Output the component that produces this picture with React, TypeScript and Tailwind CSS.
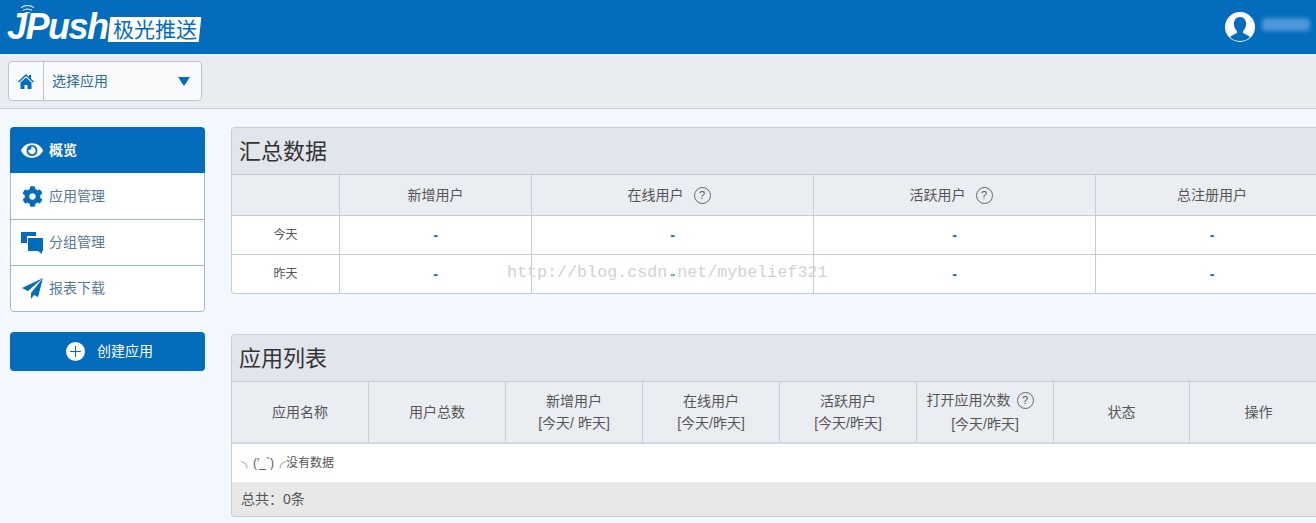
import type { ReactNode } from "react";
import { FaCog, FaEye } from "react-icons/fa";

const CJK = "font-['Liberation_Sans','Noto_Sans_CJK_SC',sans-serif]";

const NAV: { label: string; icon: ReactNode; active?: boolean }[] = [
    { label: "概览", icon: <FaEye className="size-[23px] text-white" />, active: true },
    { label: "应用管理", icon: <FaCog className="size-[21px] text-[#036cbc]" /> },
    { label: "分组管理", icon: <CommentsIcon /> },
    { label: "报表下载", icon: <PlaneIcon /> },
];

function CommentsIcon() {
    return (
        <svg viewBox="0 0 22 22" className="size-[22px] text-[#036cbc]" fill="currentColor">
            <path d="M0 0h15v4H6v7H3l-3 0z" />
            <path d="M7 6h15v13h-1v3l-4-3H7z" />
        </svg>
    );
}

function PlaneIcon() {
    return (
        <svg viewBox="0 0 21 21" className="size-[21px] text-[#036cbc]" fill="currentColor">
            <path d="M21 0 0 10l6 3L21 0 9 15v6l3-4 4 2z" />
        </svg>
    );
}

function HomeIcon() {
    return (
        <svg viewBox="0 0 16 15" className="h-[15px] w-[16px] text-[#036cbc]" fill="currentColor">
            <path d="M8 0 0 7.5l1 1L8 2l7 6.5 1-1-3-2.8V1h-2v1.9z" />
            <path d="M8 3.5 2.5 8.5V15h4v-4h3v4h4V8.5z" />
        </svg>
    );
}

function Help({ className = "ml-[10px]" }: { className?: string }) {
    return (
        <span className={`inline-flex size-[17px] items-center justify-center rounded-full border border-[#666] text-[11px] leading-none text-[#555] ${className}`}>
            ?
        </span>
    );
}

function Logo() {
    return (
        <div className="flex items-center pl-[7px] pb-[1px]">
            <div className="relative">
                <svg viewBox="0 0 16 12" className="absolute left-[13px] top-[-4px] h-[11px] w-[15px]" fill="none" stroke="white" strokeWidth="1.1">
                    <path d="M1 4c4-3 10-3 14 0M3 7c3-2 7-2 10 0M5 10c2-1 4-1 6 0" />
                </svg>
                <span className="block font-['Liberation_Sans',sans-serif] text-[36px] leading-[38px] font-bold italic tracking-[-1.5px] text-white">JPush</span>
            </div>
            <span className={`ml-[1px] mt-[5px] flex h-[25px] w-[91px] -skew-x-6 items-center justify-center bg-white ${CJK}`}>
                <span className="skew-x-6 text-[21px] leading-none text-[#036cbc]">极光推送</span>
            </span>
        </div>
    );
}

function Header() {
    return (
        <header className="flex h-[54px] items-center justify-between bg-[#036cbd]">
            <Logo />
            <div className="flex items-center gap-[7px] pr-[6px]">
                <span className="relative size-[30px] overflow-hidden rounded-full bg-white">
                    <svg viewBox="0 0 30 30" className="size-[30px]" fill="#036cbd">
                        <path d="M15 5c-4 0-6 3-6 7 0 3 1 5 3 7v2c-2 1-5 2-7 4 3 3 6 4 10 4s7-1 10-4c-2-2-5-3-7-4v-2c2-2 3-4 3-7 0-4-2-7-6-7z" />
                    </svg>
                </span>
                <span className="mb-[6px] h-[13px] w-[48px] rounded-sm bg-[#4f97d8] blur-[2px]" />
            </div>
        </header>
    );
}

function AppSelect() {
    return (
        <div className="flex h-[55px] items-center border-b border-[#c9ced8] bg-[#e9ecf1] pl-[8px]">
            <div className="flex h-[40px] w-[194px] items-stretch rounded border border-[#bcc2cf] bg-[#f8fafc]">
                <span className="flex w-[35px] items-center justify-center border-r border-[#bcc2cf]">
                    <HomeIcon />
                </span>
                <span className="flex flex-1 items-center justify-between pl-[8px] pr-[11px] text-[14px] text-[#2f6d99]">
                    选择应用
                    <span className="h-0 w-0 border-x-[6px] border-t-[9px] border-x-transparent border-t-[#036cbc]" />
                </span>
            </div>
        </div>
    );
}

function Sidebar() {
    return (
        <aside className="ml-[10px] w-[195px] shrink-0 pt-[18px]">
            <nav className="overflow-hidden rounded bg-white">
                {NAV.map((item, i) => (
                    <a
                        key={item.label}
                        href="#"
                        className={
                            item.active
                                ? "flex h-[46px] items-center gap-[5px] bg-[#036cbd] pl-[11px] text-[14px] font-bold text-white"
                                : `flex items-center gap-[5px] border-x border-b border-[#9fb6c9] pl-[10px] text-[14px] text-[#57799a] ${i === 1 ? "h-[47px] pt-[1px]" : "h-[46px]"} ${i === NAV.length - 1 ? "rounded-b" : ""}`
                        }
                    >
                        <span className="flex w-[22px] justify-center">{item.icon}</span>
                        <span className="ml-[1px]">{item.label}</span>
                    </a>
                ))}
            </nav>
            <button className="mt-[20px] flex h-[39px] w-full items-center justify-center gap-[12px] rounded bg-[#036cbd] pl-[4px] text-[14px] text-white">
                <span className="relative size-[19px] rounded-full bg-white">
                    <span className="absolute top-[9px] left-[4px] h-px w-[11px] bg-[#036cbd]" />
                    <span className="absolute top-[4px] left-[9px] h-[11px] w-px bg-[#036cbd]" />
                </span>
                创建应用
            </button>
        </aside>
    );
}

function Panel({ title, children }: { title: string; children: ReactNode }) {
    return (
        <section className="overflow-hidden rounded-t rounded-bl border border-r-0 border-[#c8ccd6]">
            <h2 className="flex h-[47px] items-center border-b border-[#c8ccd6] bg-[#e1e5ec] pl-[7px] text-[22px] font-normal text-[#333]">{title}</h2>
            {children}
        </section>
    );
}

function Cell({ children, last, className = "" }: { children?: ReactNode; last?: boolean; className?: string }) {
    return (
        <div className={`flex items-center justify-center ${last ? "" : "border-r border-[#c8ccd6]"} ${className}`}>
            {children}
        </div>
    );
}

function Dash() {
    return <span className="text-[14px] font-bold text-[#036cbc]">-</span>;
}

function Summary() {
    return (
        <Panel title="汇总数据">
            <div className="grid h-[41px] grid-cols-[108px_192px_282px_282px_232px] border-b border-[#c8ccd6] bg-[#eaedf2] text-[14px] text-[#555]">
                <Cell />
                <Cell>新增用户</Cell>
                <Cell className="pr-[7px]">在线用户<Help /></Cell>
                <Cell className="pr-[7px]">活跃用户<Help /></Cell>
                <Cell last>总注册用户</Cell>
            </div>
            {["今天", "昨天"].map((day, i) => (
                <div
                    key={day}
                    className={`grid grid-cols-[108px_192px_282px_282px_232px] bg-white text-[12px] text-[#555] ${i === 0 ? "h-[39px] border-b border-[#c8ccd6]" : "h-[38px]"}`}
                >
                    <Cell>{day}</Cell>
                    <Cell><Dash /></Cell>
                    <Cell><Dash /></Cell>
                    <Cell><Dash /></Cell>
                    <Cell last><Dash /></Cell>
                </div>
            ))}
        </Panel>
    );
}

function AppList() {
    return (
        <Panel title="应用列表">
            <div className="grid h-[62px] grid-cols-[137px_137px_137px_137px_137px_137px_136px_137px] border-b-2 border-[#d3d6dc] bg-[#eaedf2] text-center text-[14px] leading-[22px] text-[#555]">
                <Cell>应用名称</Cell>
                <Cell>用户总数</Cell>
                <Cell><span>新增用户<br />[今天/ 昨天]</span></Cell>
                <Cell><span>在线用户<br />[今天/昨天]</span></Cell>
                <Cell><span>活跃用户<br />[今天/昨天]</span></Cell>
                <Cell className="flex-col">
                    <span className="mr-[10px] flex items-center whitespace-nowrap">打开应用次数<Help className="ml-[6px]" /></span>
                    <span className="mt-[2px]">[今天/昨天]</span>
                </Cell>
                <Cell>状态</Cell>
                <Cell last>操作</Cell>
            </div>
            <div className="flex h-[38px] items-center bg-white pl-[9px] text-[12px] text-[#555]">╮(′_ˋ)╭没有数据</div>
            <div className="flex h-[34px] items-center bg-[#e8e8e8] pl-[9px] text-[14px] text-[#555]">总共：0条</div>
        </Panel>
    );
}

export default function App() {
    return (
        <div className={`relative h-[523px] w-[1316px] overflow-hidden bg-[#f2f8fd] ${CJK}`}>
            <Header />
            <AppSelect />
            <div className="flex">
                <Sidebar />
                <main className="ml-[26px] flex w-[1096px] shrink-0 flex-col gap-[40px] pt-[18px]">
                    <Summary />
                    <AppList />
                </main>
            </div>
            <span className="pointer-events-none absolute top-[262px] left-[507px] font-['Liberation_Mono',monospace] text-[16.7px] leading-[22px] text-[#d2d2d2]">
                http://blog.csdn.net/mybelief321
            </span>
        </div>
    );
}
